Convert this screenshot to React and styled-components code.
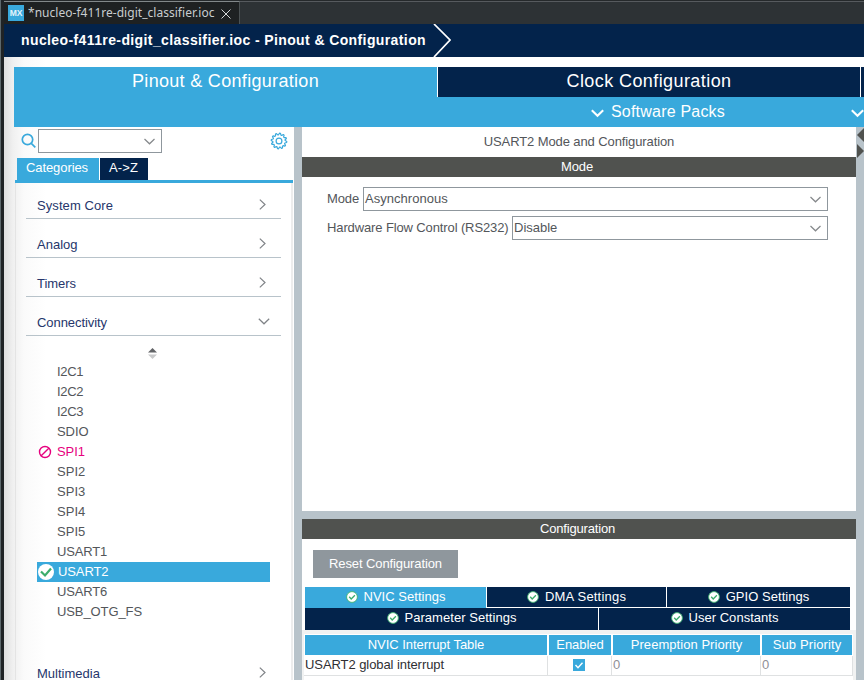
import React from 'react';
import styled, { createGlobalStyle } from 'styled-components';

const navy = '#03234b';
const blue = '#39a9dc';
const steel = '#b8c3ca';
const graphite = '#50524f';
const outline = '#8f979d';
const ink = '#53565a';

const GlobalStyle = createGlobalStyle`
  * { box-sizing: border-box; }
  body { margin: 0; overflow: hidden; background: #2d3235; }
`;

const Window = styled.div`
  width: 864px;
  height: 680px;
  display: flex;
  flex-direction: column;
  overflow: hidden;
  border-left: 1px solid #5d686c;
  padding-left: 3px;
  background: #1f2325;
  font: 13px/20px 'Liberation Sans', Arial, sans-serif;
  color: ${ink};
  white-space: nowrap;
`;

const Label = styled.span`
  letter-spacing: ${p => p.$ls || 0}px;
`;

const EditorTabs = styled.div`
  flex: none;
  display: flex;
  height: 24px;
  padding-top: 1px;
  background: linear-gradient(#25292b 1px, #2d3235 1px);
`;

const EditorTab = styled.div`
  width: 236px;
  height: 23px;
  display: flex;
  align-items: center;
  padding-left: 4px;
  border-top: 1px solid #82888a;
  border-right: 1px solid #4c5254;
  background: #1e2122;
  color: #c9cdcf;
  font: 12px/20px 'Noto Sans', sans-serif;
`;

const EditorRest = styled.div`
  flex: 1;
  border-top: 1px solid #565a5e;
`;

const MxBadge = styled.span`
  width: 16px;
  height: 16px;
  margin-right: 4px;
  background: ${blue};
  color: #e4f4fb;
  font: bold 8.5px/16px 'Liberation Sans', sans-serif;
  text-align: center;
`;

const CloseIcon = styled.svg`
  width: 10px;
  height: 10px;
  margin: 1px 0 0 7px;
`;

const Breadcrumb = styled.div`
  flex: none;
  height: 33px;
  display: flex;
  align-items: center;
  padding-left: 17px;
  background: ${navy};
  color: #fff;
  font-size: 14px;
  font-weight: bold;
  line-height: 20px;
`;

const BreadcrumbText = styled(Label)`
  padding-bottom: 2px;
`;

const BreadcrumbArrow = styled.svg`
  width: 18px;
  height: 33px;
  margin-left: 7px;
`;

const Body = styled.div`
  flex: 1;
  min-height: 0;
  display: flex;
  flex-direction: column;
  padding: 10px 0 0 10px;
  background: linear-gradient(90deg, #dfdfdf 0, #f0f0f0 9px, #fafafa 20px, #fff 42px);
`;

const MainTabs = styled.div`
  flex: none;
  height: 60px;
  display: grid;
  grid-template-columns: 423px 423px 4px;
  grid-template-rows: 30px 30px;
  background: ${blue};
`;

const MainTab = styled.div`
  display: flex;
  align-items: center;
  justify-content: center;
  padding-bottom: 2px;
  border-left: ${p => (p.$active ? 'none' : '1px solid #fff')};
  background: ${p => (p.$active ? blue : navy)};
  color: #fff;
  font-size: 18px;
`;

const PackMenu = styled.div`
  grid-column: 1 / 4;
  display: flex;
  align-items: center;
  padding-left: 577px;
  padding-bottom: 1px;
  color: #fff;
  font-size: 16px;
  overflow: hidden;
`;

const MenuChevron = styled.svg`
  flex: none;
  width: 13px;
  height: 9px;
  margin: 3px 7px 0 0;
`;

const SecondChevron = styled(MenuChevron)`
  margin-left: 126px;
`;

const Workspace = styled.div`
  flex: 1;
  min-height: 0;
  display: flex;
`;

const Sidebar = styled.div`
  flex: none;
  width: 280px;
  display: flex;
  flex-direction: column;
`;

const SearchRow = styled.div`
  height: 31px;
  display: flex;
  align-items: flex-start;
  padding: 2px 7px 0 6px;
`;

const SearchIcon = styled.svg`
  width: 16px;
  height: 16px;
  margin: 4px 1px 0 1px;
`;

const GearIcon = styled.svg`
  width: 18px;
  height: 18px;
  margin: 3px -1px 0 auto;
`;

const SelectBox = styled.div`
  width: ${p => p.$w}px;
  height: 24px;
  display: flex;
  align-items: center;
  justify-content: space-between;
  padding: 0 6px 2px 1px;
  border: 1px solid ${outline};
  background: #fff;
`;

const SelectChevron = styled.svg`
  flex: none;
  width: 11px;
  height: 7px;
  margin: 3px 0 0 auto;
`;

const ViewTabs = styled.div`
  height: 22px;
  display: flex;
  gap: 1px;
  padding-left: 3px;
`;

const ViewTab = styled.div`
  width: ${p => p.$w}px;
  padding-left: 9px;
  background: ${p => (p.$active ? blue : navy)};
  color: #fff;
`;

const CategoryPanel = styled.div`
  flex: 1;
  min-height: 0;
  margin: 0 1px;
  border: solid #ededed;
  border-width: 0 2px 0 1px;
  border-left-color: #e4e4e4;
  display: flex;
  flex-direction: column;
`;

const PanelRule = styled.div`
  flex: none;
  height: 3px;
  margin: 0 1px;
  background: ${blue};
`;

const Category = styled.div`
  flex: none;
  width: 255px;
  height: ${p => p.$h || 39}px;
  margin-left: 10px;
  padding: 0 11px 2px 11px;
  display: flex;
  align-items: flex-end;
  justify-content: space-between;
  border-bottom: 1px solid ${steel};
  color: #26366b;
`;

const CategoryChevron = styled.svg`
  width: ${p => p.$w}px;
  height: ${p => p.$h}px;
  margin: 0 ${p => p.$right}px ${p => p.$bottom}px 0;
`;

const Scroller = styled.svg`
  flex: none;
  width: 9px;
  height: 11px;
  margin: 12px 0 3px 132px;
`;

const PeripheralList = styled.div`
  flex: none;
  height: 281px;
  margin-left: 21px;
  width: 233px;
`;

const Peripheral = styled.div`
  height: 20px;
  display: flex;
  align-items: center;
  padding-left: ${p => (p.$status === 'blocked' ? 0 : p.$status ? 1 : 20)}px;
  background: ${p => (p.$status === 'selected' ? blue : 'transparent')};
  color: ${p => (p.$status === 'selected' ? '#fff' : p.$status === 'blocked' ? '#e6007e' : ink)};
  line-height: 18px;
  padding-bottom: 1px;
`;

const StateIcon = styled.svg`
  flex: none;
  width: ${p => p.$s}px;
  height: ${p => p.$s}px;
  margin: ${p => p.$m};
`;

const VerticalSplit = styled.div`
  flex: none;
  width: 8px;
  background: ${steel};
`;

const SplitArrows = styled.svg`
  display: block;
  width: 8px;
  height: 32px;
`;

const Main = styled.div`
  flex: none;
  width: 554px;
  display: flex;
  flex-direction: column;
  background: #fff;
`;

const PaneTitle = styled.div`
  height: 30px;
  line-height: 29px;
  text-align: center;
`;

const SectionBar = styled.div`
  flex: none;
  height: 20px;
  line-height: 19px;
  background: ${graphite};
  color: #fff;
  text-align: center;
  padding-right: ${p => p.$nudge || 0}px;
`;

const ModeForm = styled.div`
  flex: none;
  height: 334px;
  display: flex;
  flex-direction: column;
  gap: 5px;
  padding: 10px 28px 0 25px;
`;

const Field = styled.div`
  display: flex;
  justify-content: space-between;
  line-height: 23px;
`;

const HorizontalSplit = styled.div`
  flex: none;
  height: 8px;
  background: ${steel};
`;

const Toolbar = styled.div`
  height: 48px;
  padding: 11px;
`;

const ResetButton = styled.button`
  display: block;
  width: 145px;
  height: 28px;
  padding: 0 0 1px;
  border: 0;
  background: ${outline};
  color: #fff;
  font: inherit;
`;

const SettingsTabs = styled.div`
  margin: 0 6px 0 3px;
  height: 43px;
  display: grid;
  grid-template-rows: 20px 22px;
  row-gap: 1px;
`;

const SettingsRow = styled.div`
  display: grid;
  grid-template-columns: ${p => p.$cols};
  column-gap: 1px;
`;

const SettingsTab = styled.div`
  display: flex;
  align-items: center;
  justify-content: center;
  height: ${p => (p.$active ? 22 : p.$h)}px;
  padding-bottom: ${p => (p.$active || p.$h === 22 ? 3 : 1)}px;
  background: ${p => (p.$active ? blue : navy)};
  color: #fff;
`;

const TableArea = styled.div`
  flex: 1;
  padding: 4px 3px 0 2px;
  background: #f1f2f2;
`;

const Table = styled.div`
  height: 46px;
  display: grid;
  grid-template-columns: 244px 64px 149px 92px;
  grid-template-rows: 21px 21px;
  background: #fff;
  padding-top: 1px;
`;

const HeadCell = styled.div`
  height: 20px;
  margin: 0 1px;
  line-height: 19px;
  background: ${blue};
  color: #fff;
  text-align: center;
`;

const Cell = styled.div`
  height: 20px;
  line-height: 18px;
  padding-left: 1px;
  border-right: 1px solid #dfe1e2;
  border-bottom: 1px solid #dfe1e2;
  color: ${p => (p.$muted ? '#8f8f96' : '#2f2f33')};
`;

const CheckCell = styled(Cell)`
  display: flex;
  justify-content: center;
  padding: 3px 2px 0 0;
`;

const CheckIcon = styled.svg`
  width: 12px;
  height: 12px;
`;

const Chevron = () => (
  <SelectChevron viewBox="0 0 11 7" fill="none" stroke="#85888b" strokeWidth="1.2">
    <path d="M.5 1l5 4.8 5-4.8" />
  </SelectChevron>
);

const Section = ({ name, ls, open, h }) => (
  <Category $h={h}>
    <Label $ls={ls}>{name}</Label>
    {open ? (
      <CategoryChevron $w={12} $h={7} $right={0} $bottom={8} viewBox="0 0 12 7" fill="none" stroke="#808488" strokeWidth="1.2">
        <path d="M.8 .8L6 5.8l5.200-5" />
      </CategoryChevron>
    ) : (
      <CategoryChevron $w={7} $h={11} $right={4} $bottom={6} viewBox="0 0 7 11" fill="none" stroke="#808488" strokeWidth="1.2">
        <path d="M.8 .6l5.200 4.900-5.200 4.900" />
      </CategoryChevron>
    )}
  </Category>
);

const StatusDot = () => (
  <StateIcon $s={12} $m="1px 6px 0 0" viewBox="0 0 12 12">
    <circle cx="6" cy="6" r="5.400" fill="#fff" stroke="#3cb26f" strokeWidth=".9" />
    <path d="M3.200 5.800l2 2.200 3.700-3.800" fill="none" stroke="#3cad6c" strokeWidth="1.300" />
  </StateIcon>
);

const Tab = ({ name, ls, active, h = 20 }) => (
  <SettingsTab $active={active} $h={h}>
    <StatusDot />
    <Label $ls={ls}>{name}</Label>
  </SettingsTab>
);

const peripherals = [
  ['I2C1', -0.3], ['I2C2', -0.3], ['I2C3', -0.3], ['SDIO', -0.07],
  ['SPI1', -0.05, 'blocked'], ['SPI2', 0.05], ['SPI3', 0.05], ['SPI4', 0.05], ['SPI5', 0.05],
  ['USART1', -0.17], ['USART2', -0.1, 'selected'], ['USART6', -0.17], ['USB_OTG_FS', -0.1],
];

const gearOutline = Array.from({ length: 48 }, (_, i) => {
  const radius = i % 4 < 2 ? 7.8 : 6.2;
  const angle = (i * Math.PI) / 24 + 0.06;
  return `${9 + radius * Math.cos(angle)},${9 + radius * Math.sin(angle)}`;
}).join(' ');

export default function App() {
  return (
    <Window>
      <GlobalStyle />
      <EditorTabs>
        <EditorTab>
          <MxBadge>MX</MxBadge>
          <Label $ls={0.03}>*nucleo-f411re-digit_classifier.ioc</Label>
          <CloseIcon viewBox="0 0 10 10" stroke="#d5d8d9" strokeWidth="1">
            <path d="M.5 .5l9 9M9.500 .5l-9 9" />
          </CloseIcon>
        </EditorTab>
        <EditorRest />
      </EditorTabs>
      <Breadcrumb>
        <BreadcrumbText $ls={0.391}>nucleo-f411re-digit_classifier.ioc - Pinout &amp; Configuration</BreadcrumbText>
        <BreadcrumbArrow viewBox="0 0 18 33" fill="none" stroke="#fff" strokeWidth="1.700">
          <path d="M1 0l16 16L1 33" />
        </BreadcrumbArrow>
      </Breadcrumb>
      <Body>
        <MainTabs>
          <MainTab $active><Label $ls={0.313}>Pinout &amp; Configuration</Label></MainTab>
          <MainTab><Label $ls={0.417}>Clock Configuration</Label></MainTab>
          <MainTab />
          <PackMenu>
            <MenuChevron viewBox="0 0 13 9" fill="none" stroke="#fff" strokeWidth="2">
              <path d="M.8 1.200l5.700 5.600 5.700-5.600" />
            </MenuChevron>
            <Label $ls={0.203}>Software Packs</Label>
            <SecondChevron viewBox="0 0 13 9" fill="none" stroke="#fff" strokeWidth="2">
              <path d="M.8 1.200l5.700 5.600 5.700-5.600" />
            </SecondChevron>
          </PackMenu>
        </MainTabs>
        <Workspace>
          <Sidebar>
            <SearchRow>
              <SearchIcon viewBox="0 0 16 16" fill="none" stroke={blue} strokeWidth="1.700">
                <circle cx="6.500" cy="6.500" r="5.200" />
                <path d="M10.300 10.300l4 4" />
              </SearchIcon>
              <SelectBox $w={124}><Chevron /></SelectBox>
              <GearIcon viewBox="0 0 18 18" fill="none" stroke={blue} strokeWidth="1.200">
                <polygon points={gearOutline} strokeLinejoin="round" />
                <circle cx="9" cy="9" r="2.900" />
              </GearIcon>
            </SearchRow>
            <ViewTabs>
              <ViewTab $w={82} $active><Label $ls={-0.087}>Categories</Label></ViewTab>
              <ViewTab $w={48}><Label $ls={0.113}>A-&gt;Z</Label></ViewTab>
            </ViewTabs>
            <PanelRule />
            <CategoryPanel>
              <Section name="System Core" ls={0.078} h={36} />
              <Section name="Analog" ls={0} />
              <Section name="Timers" ls={-0.042} />
              <Section name="Connectivity" ls={-0.068} open />
              <Scroller viewBox="0 0 9 11">
                <path d="M4.500 0L9 4.500H0z" fill="#626467" />
                <path d="M4.500 11L9 6.500H0z" fill="#c9cacb" />
              </Scroller>
              <PeripheralList>
                {peripherals.map(([name, ls, status]) => (
                  <Peripheral key={name} $status={status}>
                    {status === 'blocked' && (
                      <StateIcon $s={14} $m="1px 5px 0 1px" viewBox="0 0 14 14" fill="none" stroke="#e6007e" strokeWidth="1.400">
                        <circle cx="7" cy="7" r="5.500" />
                        <path d="M3.200 10.800l7.600-7.600" />
                      </StateIcon>
                    )}
                    {status === 'selected' && (
                      <StateIcon $s={16} $m="1px 4px 0 0" viewBox="0 0 16 16">
                        <circle cx="8" cy="8" r="8" fill="#fff" />
                        <path d="M3 7.500l4 4 6-7" fill="none" stroke="#3cad6c" strokeWidth="2.200" />
                      </StateIcon>
                    )}
                    <Label $ls={ls}>{name}</Label>
                  </Peripheral>
                ))}
              </PeripheralList>
              <Section name="Multimedia" ls={0.014} h={44} />
            </CategoryPanel>
          </Sidebar>
          <VerticalSplit />
          <Main>
            <PaneTitle><Label $ls={-0.101}>USART2 Mode and Configuration</Label></PaneTitle>
            <SectionBar $nudge={4}><Label $ls={-0.1}>Mode</Label></SectionBar>
            <ModeForm>
              <Field>
                <Label $ls={-0.13}>Mode</Label>
                <SelectBox $w={465}><Label $ls={0.04}>Asynchronous</Label><Chevron /></SelectBox>
              </Field>
              <Field>
                <Label $ls={-0.12}>Hardware Flow Control (RS232)</Label>
                <SelectBox $w={316}><Label $ls={0}>Disable</Label><Chevron /></SelectBox>
              </Field>
            </ModeForm>
            <HorizontalSplit />
            <SectionBar $nudge={3}><Label $ls={-0.179}>Configuration</Label></SectionBar>
            <Toolbar>
              <ResetButton><Label $ls={-0.1}>Reset Configuration</Label></ResetButton>
            </Toolbar>
            <SettingsTabs>
              <SettingsRow $cols="181px 179px 1fr">
                <Tab name="NVIC Settings" ls={0.026} active />
                <Tab name="DMA Settings" ls={0.2} />
                <Tab name="GPIO Settings" ls={0.05} />
              </SettingsRow>
              <SettingsRow $cols="293px 1fr">
                <Tab name="Parameter Settings" ls={0.04} h={22} />
                <Tab name="User Constants" ls={0.029} h={22} />
              </SettingsRow>
            </SettingsTabs>
            <TableArea>
              <Table>
                <HeadCell><Label $ls={-0.052}>NVIC Interrupt Table</Label></HeadCell>
                <HeadCell><Label $ls={-0.031}>Enabled</Label></HeadCell>
                <HeadCell><Label $ls={0.05}>Preemption Priority</Label></HeadCell>
                <HeadCell><Label $ls={0.108}>Sub Priority</Label></HeadCell>
                <Cell><Label $ls={-0.073}>USART2 global interrupt</Label></Cell>
                <CheckCell>
                  <CheckIcon viewBox="0 0 12 12">
                    <rect width="12" height="12" fill={blue} />
                    <path d="M2.500 6l2.500 2.700 4.500-5" fill="none" stroke="#fff" strokeWidth="1.400" />
                  </CheckIcon>
                </CheckCell>
                <Cell $muted>0</Cell>
                <Cell $muted>0</Cell>
              </Table>
            </TableArea>
          </Main>
          <VerticalSplit>
            <SplitArrows viewBox="0 0 8 32" fill="#50524f">
              <path d="M8 1v14L1 8z" />
              <path d="M1 17v14l7-7z" />
            </SplitArrows>
          </VerticalSplit>
        </Workspace>
      </Body>
    </Window>
  );
}
